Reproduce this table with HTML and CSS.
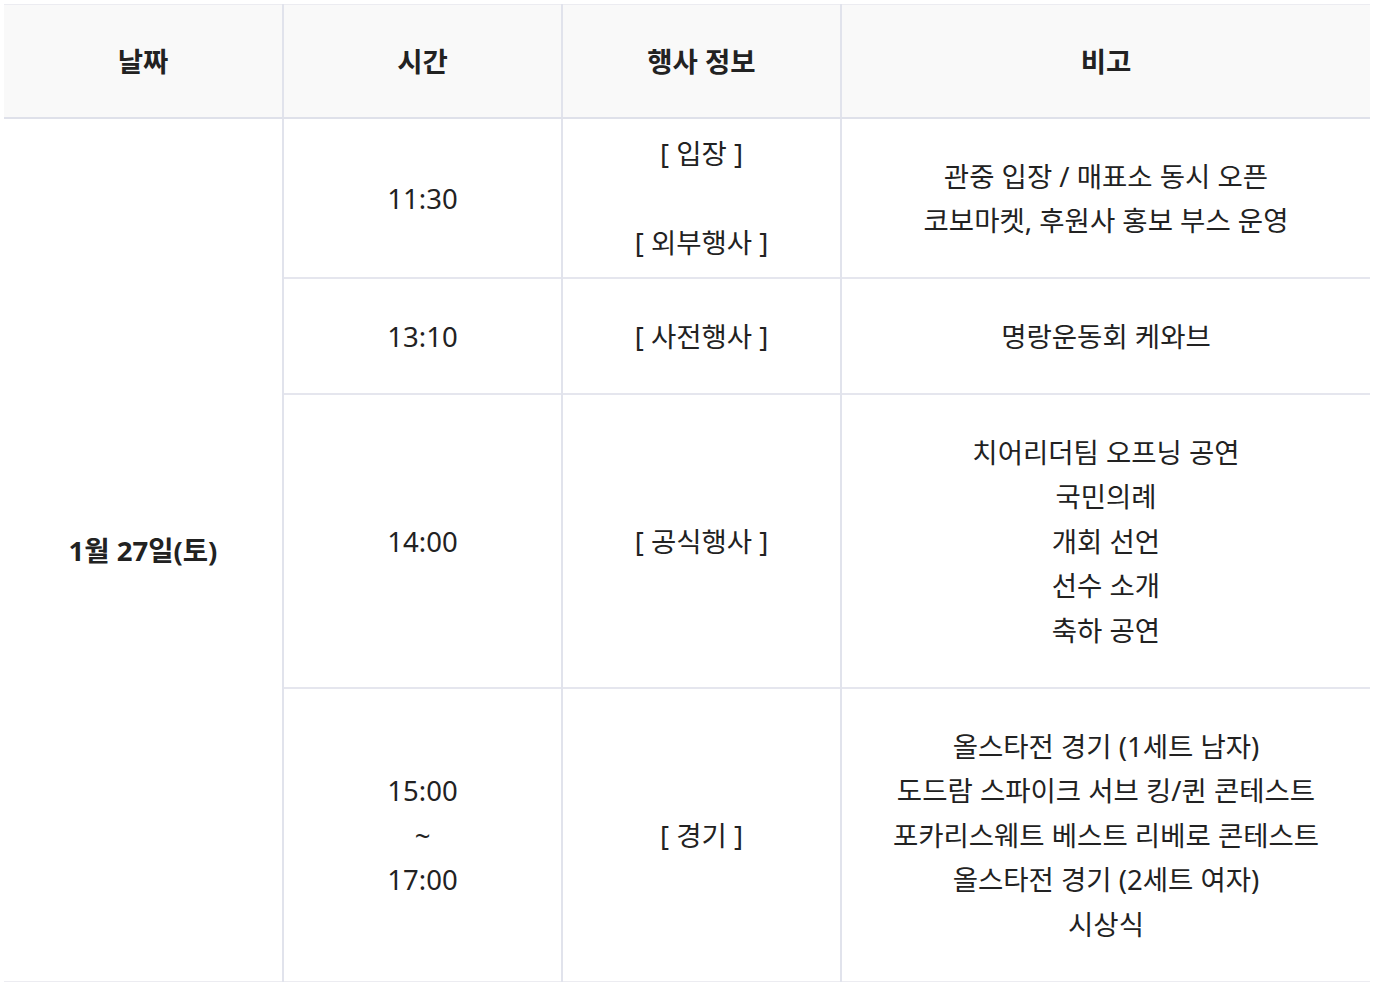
FILE: index.html
```html
<!DOCTYPE html>
<html lang="ko">
<head>
<meta charset="utf-8">
<title>일정</title>
<link rel="stylesheet" href="styles.css">
</head>
<body>
<div class="wrap">
<table class="schedule">
  <colgroup>
    <col class="c-date"><col class="c-time"><col class="c-info"><col class="c-note">
  </colgroup>
  <thead>
    <tr class="head">
      <th>날짜</th><th>시간</th><th>행사 정보</th><th>비고</th>
    </tr>
  </thead>
  <tbody>
    <tr class="r1">
      <td class="date" rowspan="4">1월 27일(토)</td>
      <td>11:30</td>
      <td>[ 입장 ]<br><br>[ 외부행사 ]</td>
      <td>관중 입장 / 매표소 동시 오픈<br>코보마켓, 후원사 홍보 부스 운영</td>
    </tr>
    <tr class="r2">
      <td>13:10</td>
      <td>[ 사전행사 ]</td>
      <td>명랑운동회 케와브</td>
    </tr>
    <tr class="r3">
      <td>14:00</td>
      <td>[ 공식행사 ]</td>
      <td>치어리더팀 오프닝 공연<br>국민의례<br>개회 선언<br>선수 소개<br>축하 공연</td>
    </tr>
    <tr class="r4">
      <td>15:00<br>~<br>17:00</td>
      <td>[ 경기 ]</td>
      <td>올스타전 경기 (1세트 남자)<br>도드람 스파이크 서브 킹/퀸 콘테스트<br>포카리스웨트 베스트 리베로 콘테스트<br>올스타전 경기 (2세트 여자)<br>시상식</td>
    </tr>
  </tbody>
</table>
</div>
</body>
</html>
```

FILE: styles.css
```css
html, body {
  margin: 0;
  padding: 0;
  background: #ffffff;
}

.wrap {
  padding: 4px 14px 0 4px;
}

.schedule {
  width: 1366px;
  border-collapse: collapse;
  table-layout: fixed;
  font-family: "Noto Sans", "Noto Sans CJK KR", sans-serif;
  font-size: 27.5px;
  line-height: 44.4px;
  color: #222222;
  text-align: center;
  border-top: 1px solid #ececf1;
  border-bottom: 1px solid #ececf1;
}

.c-date, .c-time, .c-info { width: 279px; }
.c-note { width: 529px; }

.schedule th,
.schedule td {
  padding: 2px 0 0 0;
  vertical-align: middle;
  border-left: 2px solid #e1e3ec;
  border-top: 2px solid #e5e6ee;
}

.schedule th:first-child,
.schedule td.date {
  border-left: none;
}

.head th {
  height: 110px;
  background: #f9f9f9;
  font-weight: 700;
  border-top: none;
  border-bottom: 2px solid #dfe1ea;
}

.date {
  font-weight: 700;
}

.r1 td { height: 156px; }
.r2 td { height: 112px; }
.r3 td { height: 290px; }
.r4 td { height: 290px; }
```
